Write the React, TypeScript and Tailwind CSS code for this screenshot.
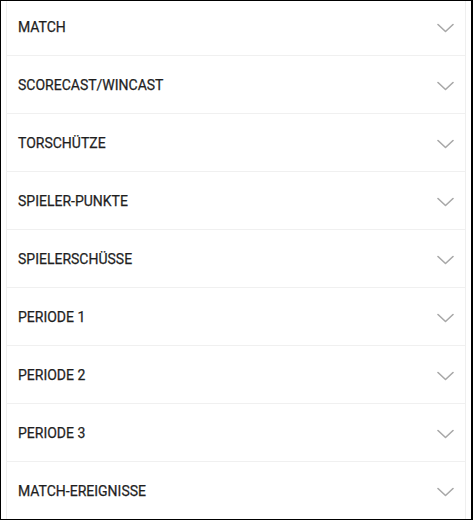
const items = [
  "MATCH",
  "SCORECAST/WINCAST",
  "TORSCHÜTZE",
  "SPIELER-PUNKTE",
  "SPIELERSCHÜSSE",
  "PERIODE 1",
  "PERIODE 2",
  "PERIODE 3",
  "MATCH-EREIGNISSE",
];

function Chevron() {
  return (
    <svg width="17" height="10" viewBox="0 0 17 10" fill="none">
      <polyline
        points="1,1.5 8.5,8.5 16,1.5"
        stroke="#a8a8a8"
        strokeWidth="1.6"
        strokeLinecap="round"
        strokeLinejoin="round"
      />
    </svg>
  );
}

export default function App() {
  return (
    <div
      className="w-[473px] h-[520px] overflow-hidden border border-r-2 border-black bg-white px-[5px]"
      style={{ fontFamily: "Roboto, 'Liberation Sans', sans-serif" }}
    >
      <div className="h-full border-x border-[#efefef]">
        {items.map((label, i) => (
          <div
            key={label}
            className={`flex items-center justify-between border-b border-[#f0f0f0] pl-[11px] pr-[11px] cursor-pointer ${
              i === 0 ? "h-[55px] pb-[1px]" : "h-[58px] pt-[2px]"
            }`}
          >
            <span className="text-[14px] font-normal text-[#1f1f1f] [-webkit-text-stroke:0.25px_#1f1f1f]">
              {label}
            </span>
            <Chevron />
          </div>
        ))}
      </div>
    </div>
  );
}
